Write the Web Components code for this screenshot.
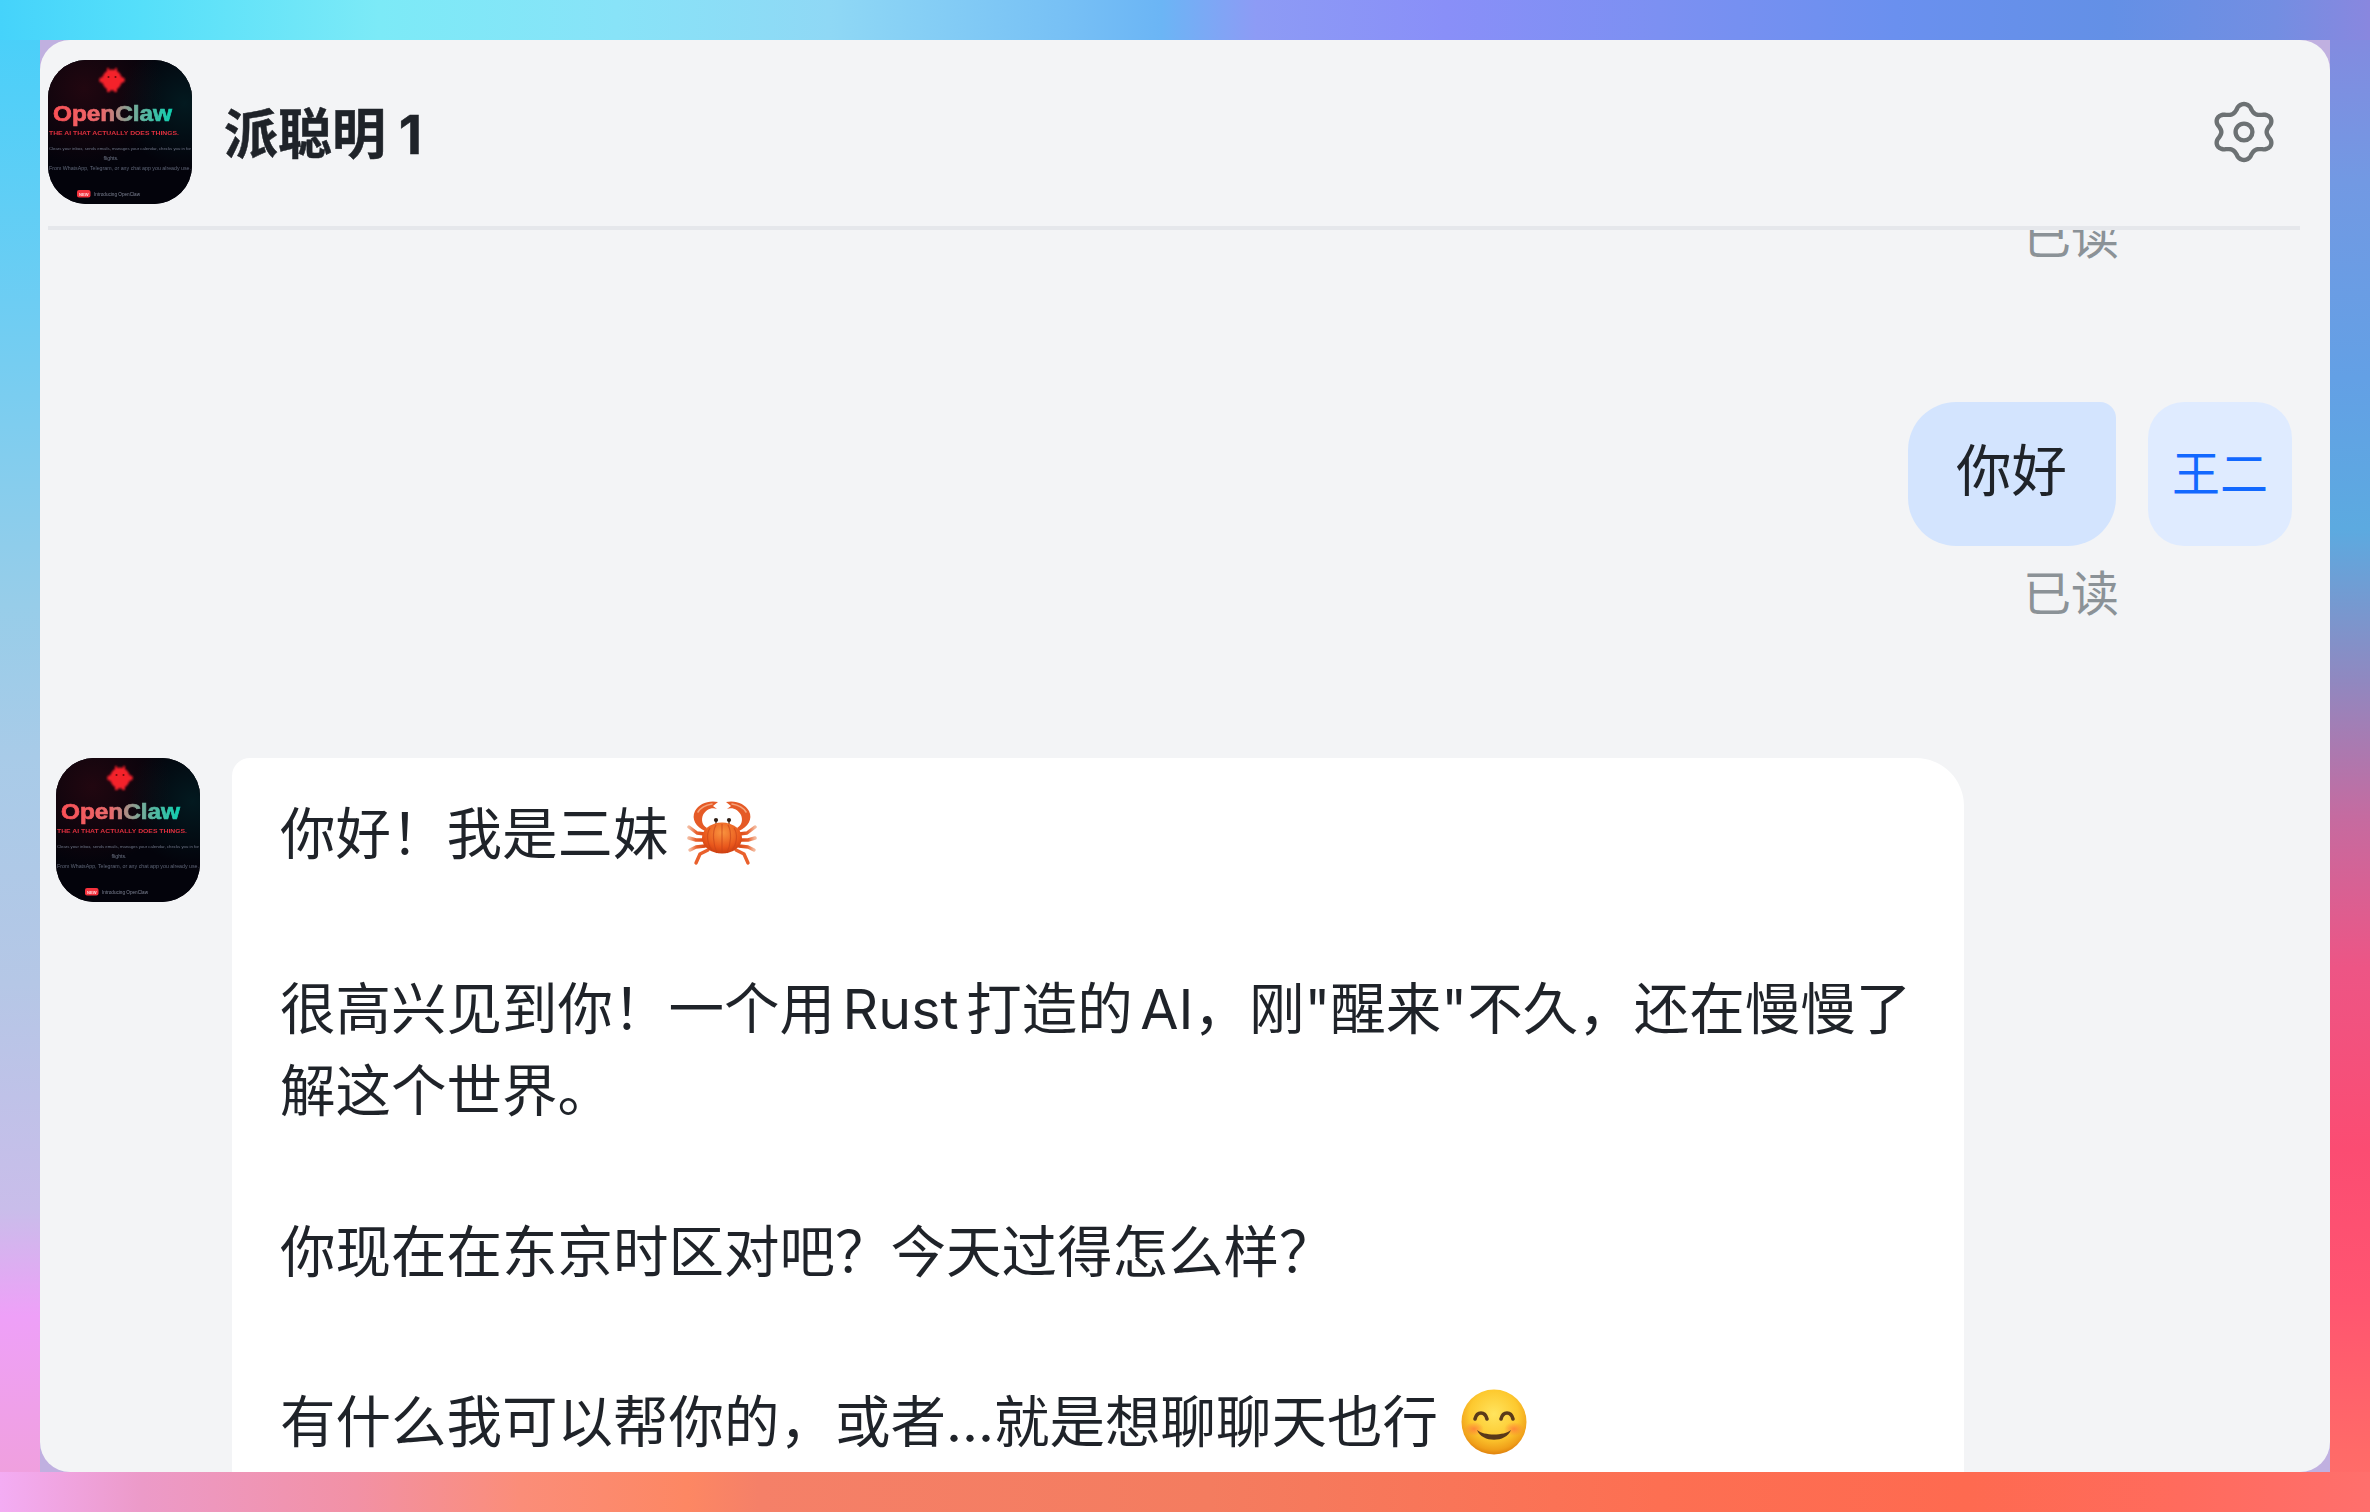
<!DOCTYPE html>
<html lang="zh-CN">
<head>
<meta charset="utf-8">
<title>派聪明 1</title>
<style>
html,body{margin:0;padding:0;height:100%;overflow:hidden}
body{font-family:Inter,"Noto Sans CJK SC",sans-serif;color:#1f2329}
</style>
</head>
<body>
<oc-desktop>
  <chat-window>
    <chat-header slot="header" name="派聪明 1"></chat-header>
    <message-list>
      <read-receipt style="margin-top:-25px"></read-receipt>
      <user-message who="王二" style="margin-top:133px">你好</user-message>
      <read-receipt style="margin-top:16px"></read-receipt>
      <ai-message style="margin-top:132px">
        <p class="a">你好！我是三妹 <crab-emoji></crab-emoji></p>
        <p class="b">很高兴见到你！一个用 Rust 打造的 AI，刚"醒来"不久，还在慢慢了解这个世界。</p>
        <p class="c">你现在在东京时区对吧？今天过得怎么样？</p>
        <p class="d">有什么我可以帮你的，或者...就是想聊聊天也行 <smile-emoji></smile-emoji></p>
      </ai-message>
    </message-list>
  </chat-window>
</oc-desktop>
<script>
function shadow(el, html){ el.attachShadow({mode:'open'}).innerHTML = html; return el.shadowRoot; }

customElements.define('oc-desktop', class extends HTMLElement{
  connectedCallback(){ shadow(this, `<style>
    :host{display:flex;box-sizing:border-box;width:2370px;height:1512px;padding:40px;
      background-repeat:no-repeat;
      background-image:
        linear-gradient(90deg,#45d3fb 0%,#55dffa 6%,#7ceaf7 16%,#88e3f8 26%,#8fd8f5 35%,#77c0f5 45%,#6bb5f5 49%,#8d9bf5 53%,#898ff8 61%,#7c90f2 70%,#6a90ef 80%,#6390e6 89%,#738ee2 96%,#8987df 100%),
        linear-gradient(90deg,#f3acf3 0%,#ec9ac8 6%,#f291a5 15%,#fb8d78 22%,#fd8763 29%,#f58068 32%,#f47c5f 51%,#fd6f52 70%,#fe6a50 83%,#ff6b5d 92%,#ff6f6c 100%),
        linear-gradient(180deg,#45d0fa 0%,#6dcdf3 20%,#97cde9 40%,#a8cbe8 50%,#b5c7e6 65%,#c9bdea 80%,#eea0f8 87%,#f0a0d8 100%),
        linear-gradient(180deg,#8787df 0%,#7299e3 12%,#63a0e5 25%,#5caae0 35%,#9088c0 45%,#c56ba0 54%,#ed5585 64%,#fb4c72 76%,#ff5570 86%,#ff6a68 96%,#ff6f6a 100%);
      background-size:100% 40px,100% 40px,40px 100%,40px 100%;
      background-position:0 0,0 100%,0 0,100% 0;
      background-color:#c0b0e0}
  </style><slot></slot>`); }
});

customElements.define('chat-window', class extends HTMLElement{
  connectedCallback(){ shadow(this, `<style>
    :host{display:flex;flex-direction:column;flex:1;min-width:0;background:#f3f4f6;border-radius:30px;overflow:hidden}
    .b{flex:1;min-height:0;display:flex;flex-direction:column;overflow:hidden}
  </style><slot name="header"></slot><div class="b"><slot></slot></div>`); }
});

customElements.define('oc-avatar', class extends HTMLElement{
  connectedCallback(){
    const id = 'g'+Math.random().toString(36).slice(2,8);
    shadow(this, `<style>
    :host{display:block;flex:none;width:144px;height:144px;border-radius:38px;overflow:hidden;background:#03030b}
    svg{display:block}
    text{font-family:"Liberation Sans",sans-serif}
  </style>
  <svg width="144" height="144" viewBox="0 0 144 144" xmlns="http://www.w3.org/2000/svg">
    <defs>
      <radialGradient id="${id}a" cx="25%" cy="20%" r="55%"><stop offset="0" stop-color="#3a0a14" stop-opacity=".55"/><stop offset="1" stop-color="#3a0a14" stop-opacity="0"/></radialGradient>
      <radialGradient id="${id}b" cx="95%" cy="30%" r="45%"><stop offset="0" stop-color="#033034" stop-opacity=".5"/><stop offset="1" stop-color="#033034" stop-opacity="0"/></radialGradient>
      <linearGradient id="${id}c" gradientUnits="userSpaceOnUse" x1="5" x2="124" y1="0" y2="0"><stop offset="0" stop-color="#fb5056"/><stop offset=".42" stop-color="#e86a6c"/><stop offset=".65" stop-color="#7ea898"/><stop offset="1" stop-color="#10d0b0"/></linearGradient>
      <filter id="${id}f" x="-10%" y="-10%" width="120%" height="120%"><feGaussianBlur stdDeviation=".55"/></filter>
      <filter id="${id}h" x="-30%" y="-30%" width="160%" height="160%"><feGaussianBlur stdDeviation=".9"/></filter>
    </defs>
    <rect width="144" height="144" fill="#03030b"/>
    <rect width="144" height="144" fill="url(#${id}a)"/>
    <rect width="144" height="144" fill="url(#${id}b)"/>
    <g fill="#f4202c" filter="url(#${id}h)">
      <ellipse cx="64" cy="20" rx="10" ry="10.5"/>
      <circle cx="54" cy="20" r="2.8"/><circle cx="74" cy="20" r="2.8"/>
      <rect x="59" y="8" width="2" height="3.5"/><rect x="67" y="8" width="2" height="3.5"/>
      <rect x="59" y="29" width="3" height="3"/><rect x="66" y="29" width="3" height="3"/>
    </g>
    <g filter="url(#${id}f)">
      <circle cx="60.5" cy="17" r="1" fill="#70080e"/><circle cx="67.5" cy="17" r="1" fill="#70080e"/>
      <text x="5" y="61" font-size="22" font-weight="700" textLength="119" lengthAdjust="spacingAndGlyphs" fill="url(#${id}c)" stroke="url(#${id}c)" stroke-width=".7">OpenClaw</text>
      <text x="1" y="74.5" font-size="5.6" font-weight="700" textLength="130" lengthAdjust="spacingAndGlyphs" fill="#e0303e">THE AI THAT ACTUALLY DOES THINGS.</text>
      <text x="1" y="90" font-size="4.4" textLength="142" lengthAdjust="spacingAndGlyphs" fill="#6f7688">Clears your inbox, sends emails, manages your calendar, checks you in for</text>
      <text x="63" y="99.5" font-size="5.2" text-anchor="middle" fill="#6f7688">flights.</text>
      <text x="1" y="110" font-size="5" textLength="142" lengthAdjust="spacingAndGlyphs" fill="#5f6678">From WhatsApp, Telegram, or any chat app you already use.</text>
      <rect x="29" y="130" width="13.5" height="7.5" rx="2" fill="#f4303c"/>
      <text x="31" y="135.8" font-size="4.4" font-weight="700" textLength="9.5" lengthAdjust="spacingAndGlyphs" fill="#ffd9dc">NEW</text>
      <text x="46" y="136" font-size="5" textLength="46" lengthAdjust="spacingAndGlyphs" fill="#7d8394">Introducing OpenClaw</text>
    </g>
  </svg>`); }
});

customElements.define('gear-icon', class extends HTMLElement{
  connectedCallback(){
    let d = '';
    for(let i=0;i<=180;i++){
      const t = i/180*Math.PI*2;
      const c = Math.cos(6*t);
      const r = 24.4 + 3.6*(c>=0 ? Math.pow(c,.8) : -Math.pow(-c,.8));
      const x = 32 + 1.09*r*Math.sin(t);
      const y = 32 - r*Math.cos(t);
      d += (i? 'L':'M') + x.toFixed(2) + ' ' + y.toFixed(2);
    }
    shadow(this, `<style>:host{display:block;flex:none;width:64px;height:64px}svg{display:block}</style>
    <svg width="64" height="64" viewBox="0 0 64 64" fill="none" stroke="#6c7173" stroke-width="4.4" stroke-linejoin="round" xmlns="http://www.w3.org/2000/svg">
      <path d="${d}Z"/><circle cx="32" cy="32" r="8.4"/>
    </svg>`); }
});

customElements.define('chat-header', class extends HTMLElement{
  connectedCallback(){ shadow(this, `<style>
    :host{display:flex;align-items:flex-start;flex:none;box-sizing:border-box;height:190px;margin:0 30px 0 8px;padding:20px 24px 0 0;border-bottom:4px solid #e5e7eb}
    h1{margin:0 0 0 32px;flex:1;font:700 54px/150px Inter,"Noto Sans CJK SC",sans-serif;color:#1f2329;-webkit-text-stroke:.5px #1f2329}
    gear-icon{margin-top:40px}
  </style><oc-avatar></oc-avatar><h1>${this.getAttribute('name')}</h1><gear-icon></gear-icon>`); }
});

customElements.define('message-list', class extends HTMLElement{
  connectedCallback(){ shadow(this, `<style>
    :host{display:flex;flex-direction:column;flex:1;min-height:0;padding:0 38px 0 16px}
  </style><slot></slot>`); }
});

customElements.define('read-receipt', class extends HTMLElement{
  connectedCallback(){ shadow(this, `<style>
    :host{display:block;flex:none;text-align:right;margin-right:173px;font:400 48px/64px Inter,"Noto Sans CJK SC",sans-serif;color:#8b9297}
  </style>已读`); }
});

customElements.define('user-message', class extends HTMLElement{
  connectedCallback(){ shadow(this, `<style>
    :host{display:flex;flex:none;justify-content:flex-end;gap:32px;font-family:Inter,"Noto Sans CJK SC",sans-serif}
    .bubble{box-sizing:border-box;width:208px;height:144px;padding:0 0 0 48px;background:#d3e4fe;border-radius:48px 16px 48px 48px;font-size:55.5px;line-height:138px;color:#1f2329}
    .av{width:144px;height:144px;border-radius:36px;background:#dfebff;color:#1268ff;font-size:48px;line-height:144px;text-align:center}
  </style><div class="bubble"><slot></slot></div><div class="av">${this.getAttribute('who')}</div>`); }
});

customElements.define('ai-message', class extends HTMLElement{
  connectedCallback(){ shadow(this, `<style>
    :host{display:flex;flex:none;gap:32px;align-items:flex-start}
    .bubble{box-sizing:border-box;width:1732px;padding:35px 48px 60px;background:#fff;border-radius:18px 48px 48px 48px;font:400 55.5px/82px Inter,"Noto Sans CJK SC",sans-serif;color:#1f2329}
    ::slotted(p){margin:0}
    ::slotted(p.a){margin-bottom:93px}
    ::slotted(p.b){margin-bottom:79px;word-spacing:-8px}
    ::slotted(p.c){margin-bottom:88px}
  </style><oc-avatar></oc-avatar><div class="bubble"><slot></slot></div>`); }
});

customElements.define('crab-emoji', class extends HTMLElement{
  connectedCallback(){ shadow(this, `<style>
    :host{display:inline-block;width:70px;height:66px;vertical-align:-12px;margin:-30px 0 0 3px}
    svg{display:block}
  </style>
  <svg width="70" height="66" viewBox="0 0 70 66" role="img" aria-label="🦀" xmlns="http://www.w3.org/2000/svg">
    <defs>
      <radialGradient id="b" cx="50%" cy="32%" r="72%"><stop offset="0" stop-color="#f9943f"/><stop offset=".65" stop-color="#e9571c"/><stop offset="1" stop-color="#c83a0e"/></radialGradient>
      <linearGradient id="l" x1="0" x2="1" y1="0" y2="0"><stop offset="0" stop-color="#f3b89c"/><stop offset=".45" stop-color="#e9602c"/><stop offset="1" stop-color="#d94a18"/></linearGradient>
      <linearGradient id="r" x1="1" x2="0" y1="0" y2="0"><stop offset="0" stop-color="#f3b89c"/><stop offset=".45" stop-color="#e9602c"/><stop offset="1" stop-color="#d94a18"/></linearGradient>
    </defs>
    <g fill="none" stroke-linecap="round" stroke-linejoin="round" stroke-width="3.4">
      <g stroke="url(#l)">
        <path d="M18 34L10 33 2 27"/>
        <path d="M17 40L9 40 2 38"/>
        <path d="M18 46L9 47 3 50"/>
      </g>
      <g stroke="url(#r)">
        <path d="M52 34L60 33 68 27"/>
        <path d="M53 40L61 40 68 38"/>
        <path d="M52 46L61 47 67 50"/>
      </g>
      <path d="M21 50L13 54 9 63" stroke="#e9602c"/>
      <path d="M49 50L57 54 61 63" stroke="#e9602c"/>
    </g>
    <path d="M18 31C9 27 4 19 8 11 12 4 21 0 31 2L26 6 30 9C24 7 19 10 16 15 14 20 15 25 20 28Z" fill="#e55a26"/>
    <path d="M52 31C61 27 66 19 62 11 58 4 49 0 39 2L44 6 40 9C46 7 51 10 54 15 56 20 55 25 50 28Z" fill="#e55a26"/>
    <path d="M11 12C14 7 19 5 25 4" fill="none" stroke="#f4a47c" stroke-width="1.6" stroke-linecap="round"/>
    <path d="M59 12C56 7 51 5 45 4" fill="none" stroke="#f4a47c" stroke-width="1.6" stroke-linecap="round"/>
    <g stroke="#5a3420" stroke-width="1.4"><path d="M29 20V25M42 20V25"/></g>
    <circle cx="29" cy="20" r="2.1" fill="#2e1d14"/><circle cx="42" cy="20" r="2.1" fill="#2e1d14"/>
    <ellipse cx="35" cy="38" rx="20" ry="15.5" fill="url(#b)"/>
    <g fill="none" stroke="#c9451a" stroke-width="1.2" opacity=".65">
      <path d="M35 24V53M29 25C25 32 26 44 30 53M41 25C45 32 44 44 40 53M23 28C19 34 20 44 25 50M47 28C51 34 50 44 45 50"/>
    </g>
  </svg>`); }
});

customElements.define('smile-emoji', class extends HTMLElement{
  connectedCallback(){ shadow(this, `<style>
    :host{display:inline-block;width:66px;height:66px;vertical-align:-13px;margin:-30px 0 0 7px}
    svg{display:block}
  </style>
  <svg width="66" height="66" viewBox="0 0 66 66" role="img" aria-label="😊" xmlns="http://www.w3.org/2000/svg">
    <defs>
      <radialGradient id="f" cx="50%" cy="38%" r="62%"><stop offset="0" stop-color="#ffe45e"/><stop offset=".6" stop-color="#fdc92f"/><stop offset=".88" stop-color="#f0a01a"/><stop offset="1" stop-color="#e0820c"/></radialGradient>
      <radialGradient id="c"><stop offset="0" stop-color="#ff7a3a" stop-opacity=".8"/><stop offset="1" stop-color="#ff7a3a" stop-opacity="0"/></radialGradient>
    </defs>
    <circle cx="33" cy="33" r="32.5" fill="url(#f)"/>
    <ellipse cx="13" cy="40" rx="10" ry="7" fill="url(#c)"/><ellipse cx="53" cy="40" rx="10" ry="7" fill="url(#c)"/>
    <g fill="none" stroke="#5a3a1a" stroke-width="3.6" stroke-linecap="round">
      <path d="M14 30C16 22 24 22 26 30"/><path d="M40 30C42 22 50 22 52 30"/>
    </g>
    <path d="M16 41C21 54 45 54 50 41C43 47 23 47 16 41Z" fill="#5a3a1a"/>
  </svg>`); }
});
</script>
</body>
</html>
